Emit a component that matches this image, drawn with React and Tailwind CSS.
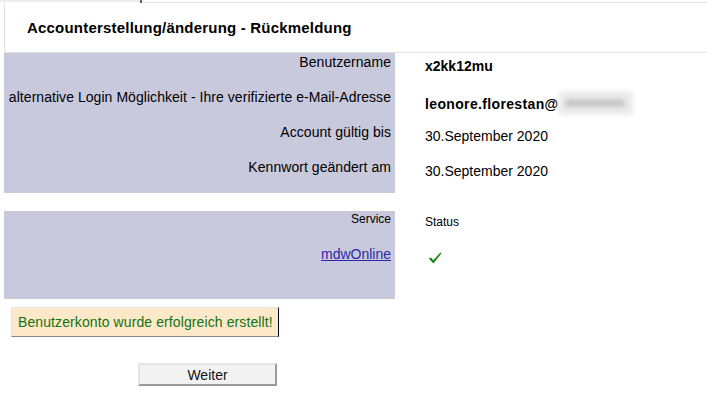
import React from 'react';

const Check = () => (
  <svg width="13" height="12" viewBox="0 0 13 12" className="block">
    <path d="M0 6.5 L2 5.5 L4.2 8.2 L11.5 0.5 L12.5 1.3 L4.3 11.5 Z" fill="#128212" />
  </svg>
);

const rows = [
  { label: 'Benutzername', value: 'x2kk12mu', bold: true },
  { label: 'alternative Login Möglichkeit - Ihre verifizierte e-Mail-Adresse', value: 'email', bold: true },
  { label: 'Account gültig bis', value: '30.September 2020' },
  { label: 'Kennwort geändert am', value: '30.September 2020' },
];

export default function App() {
  return (
    <div className="w-[707px] h-[399px] bg-white text-black font-['Liberation_Sans',Arial,sans-serif] overflow-hidden">
      {/* top strip */}
      <div className="flex h-[3px]">
        <div className="w-[140px] h-[2px] bg-[#ececec]" />
        <div className="w-[2px] h-[3px] bg-[#666]" />
        <div className="w-[565px] border-b border-[#e2e2e2]" />
      </div>

      {/* header */}
      <div className="ml-1 w-[703px] h-[50px] border-l border-b border-[#e2e2e2] flex items-center pl-[22px] pb-[1px]">
        <h1 className="text-[15px] font-bold leading-none tracking-[0.2px]">Accounterstellung/änderung - Rückmeldung</h1>
      </div>

      {/* account data */}
      <div className="ml-1 grid grid-cols-[391px_1fr]">
        {rows.map((r, i) => (
          <React.Fragment key={i}>
            <div className="h-[35px] bg-[#c9c9de] text-right pr-1 pt-[1px] text-[14px] leading-4 tracking-[0.05px]">{r.label}</div>
            <div className={'h-[35px] pl-[30px] pt-[5px] text-[14px] leading-4 ' + (r.bold ? 'font-bold' : '')}>
              {r.value === 'email' ? (
                <span className="flex items-center">
                  <span className="tracking-[0.35px]">leonore.florestan@</span>
                  <span className="relative inline-block w-[74px] h-[24px] -mt-[2px]">
                    <span className="absolute inset-0 bg-[#ececec] blur-[2px]" />
                    <span className="absolute left-[6px] right-[8px] top-[8px] h-[8px] bg-[#c8c8c8] blur-[2px]" />
                  </span>
                </span>
              ) : (
                r.value
              )}
            </div>
          </React.Fragment>
        ))}
      </div>

      {/* services */}
      <div className="ml-1 mt-[18px] grid grid-cols-[391px_1fr]">
        <div className="h-[88px] bg-[#c9c9de] flex flex-col items-end pr-1">
          <span className="text-[12px] leading-[14px] mt-[1px]">Service</span>
          <a href="#" className="mt-[20px] text-[14px] leading-4 text-[#2a2aa8] underline">mdwOnline</a>
        </div>
        <div className="pl-[30px] pt-[4px]">
          <div className="text-[12px] leading-[14px]">Status</div>
          <div className="mt-[23px] ml-[4px]">
            <Check />
          </div>
        </div>
      </div>

      {/* message */}
      <div className="ml-[11px] mt-[8px] w-[268px] h-[30px] bg-[#fde9c9] border border-t-[#e6e6e6] border-l-[#e6e6e6] border-r-[#000033] border-b-[#8a8a8a] flex items-center pl-[6px] text-[14px] tracking-[0.1px] text-[#137313]">
        Benutzerkonto wurde erfolgreich erstellt!
      </div>

      {/* button */}
      <div className="mt-[26px] ml-[138px]">
        <button className="w-[139px] h-[23px] bg-[#f2f2f2] border-2 border-t-[#e4e4e4] border-l-[#e4e4e4] border-r-[#9a9a9a] border-b-[#9a9a9a] text-[14px] leading-none text-[#111] flex items-center justify-center">
          Weiter
        </button>
      </div>
    </div>
  );
}
